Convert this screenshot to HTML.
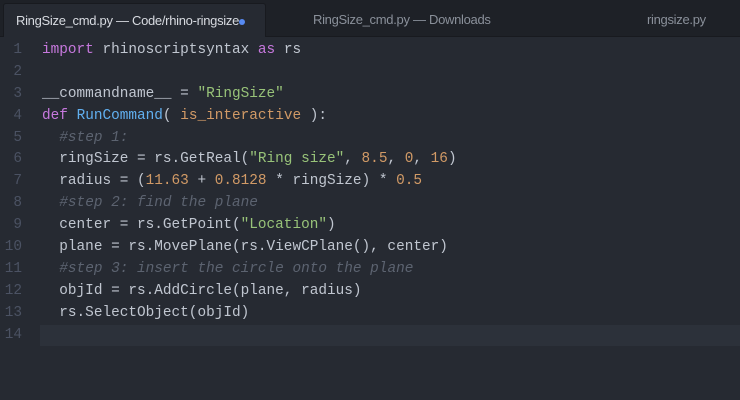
<!DOCTYPE html>
<html><head><meta charset="utf-8"><style>
html,body{margin:0;padding:0;width:740px;height:400px;overflow:hidden;background:#262a32;}
.tabs{position:absolute;left:0;top:0;width:740px;height:37px;background:#1e2127;border-bottom:1px solid #181a1f;box-sizing:border-box;}
.tab{position:absolute;top:3px;height:34px;font:13px "Liberation Sans",sans-serif;color:#8a909a;line-height:34px;letter-spacing:-0.3px;}
.active{left:3px;width:263px;background:#262a32;border:1px solid #181a1f;border-bottom:none;border-radius:3px 3px 0 0;color:#d7dae0;box-sizing:border-box;padding-left:12px;}
.dot{display:inline-block;width:6px;height:6px;border-radius:50%;background:#578af2;vertical-align:middle;}
.code{position:absolute;left:0;top:40px;width:740px;font:14.4px "Liberation Mono",monospace;}
.l{position:relative;height:21.9px;line-height:21.9px;white-space:pre;color:#c0c6d0;}
.n{position:absolute;left:0;width:22px;text-align:right;color:#4b5263;}
.t{position:absolute;left:42px;}
.cur{background:#2c313a;}
.cur .n{color:#abb2bf;}
.k{color:#c678dd}.f{color:#61afef}.s{color:#98c379}.o{color:#d19a66}.c{color:#5c6370;font-style:italic}
</style></head><body>
<div class="tabs">
<div class="tab active">RingSize_cmd.py — Code/rhino-ringsize<span class="dot"></span></div>
<div class="tab" style="left:313px">RingSize_cmd.py — Downloads</div>
<div class="tab" style="left:647px">ringsize.py</div>
</div>
<div class="code">
<div class="l"><span class="n">1</span><span class="t"><span class="k">import</span> rhinoscriptsyntax <span class="k">as</span> rs</span></div>
<div class="l"><span class="n">2</span></div>
<div class="l"><span class="n">3</span><span class="t">__commandname__ = <span class="s">"RingSize"</span></span></div>
<div class="l"><span class="n">4</span><span class="t"><span class="k">def</span> <span class="f">RunCommand</span>( <span class="o">is_interactive</span> ):</span></div>
<div class="l"><span class="n">5</span><span class="t">  <span class="c">#step 1:</span></span></div>
<div class="l"><span class="n">6</span><span class="t">  ringSize = rs.GetReal(<span class="s">"Ring size"</span>, <span class="o">8.5</span>, <span class="o">0</span>, <span class="o">16</span>)</span></div>
<div class="l"><span class="n">7</span><span class="t">  radius = (<span class="o">11.63</span> + <span class="o">0.8128</span> * ringSize) * <span class="o">0.5</span></span></div>
<div class="l"><span class="n">8</span><span class="t">  <span class="c">#step 2: find the plane</span></span></div>
<div class="l"><span class="n">9</span><span class="t">  center = rs.GetPoint(<span class="s">"Location"</span>)</span></div>
<div class="l"><span class="n">10</span><span class="t">  plane = rs.MovePlane(rs.ViewCPlane(), center)</span></div>
<div class="l"><span class="n">11</span><span class="t">  <span class="c">#step 3: insert the circle onto the plane</span></span></div>
<div class="l"><span class="n">12</span><span class="t">  objId = rs.AddCircle(plane, radius)</span></div>
<div class="l"><span class="n">13</span><span class="t">  rs.SelectObject(objId)</span></div>
<div class="l"><span class="n">14</span><span class="cur" style="position:absolute;left:40px;right:0;top:0;bottom:0"></span></div>
</div>
</body></html>
